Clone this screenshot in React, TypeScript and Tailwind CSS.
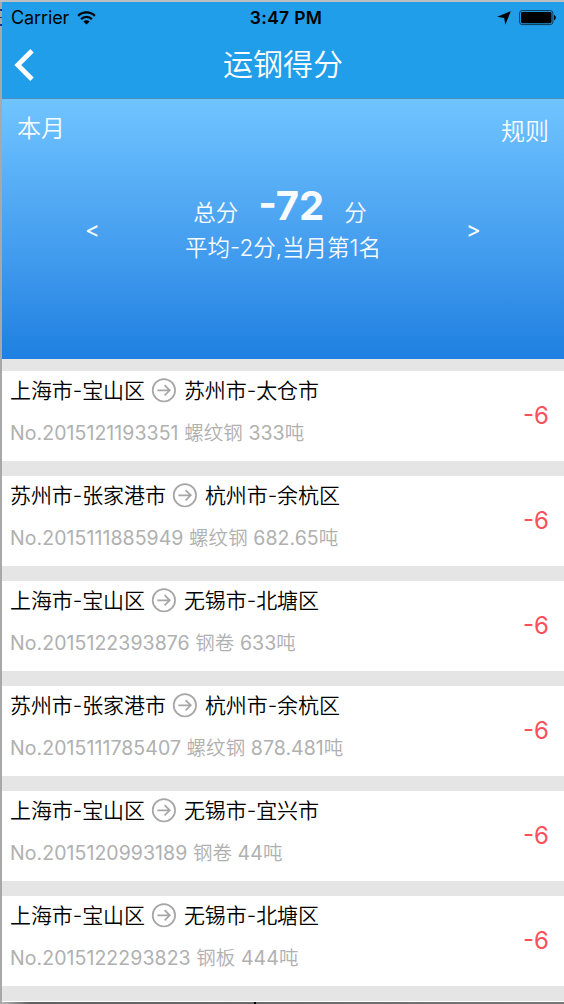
type Shipment = {
  no: string;
  from: string;
  to: string;
  cargo: string;
  tons: string;
  score: string;
};

const SHIPMENTS: Shipment[] = [
  { no: "2015121193351", from: "上海市-宝山区", to: "苏州市-太仓市", cargo: "螺纹钢", tons: "333", score: "-6" },
  { no: "2015111885949", from: "苏州市-张家港市", to: "杭州市-余杭区", cargo: "螺纹钢", tons: "682.65", score: "-6" },
  { no: "2015122393876", from: "上海市-宝山区", to: "无锡市-北塘区", cargo: "钢卷", tons: "633", score: "-6" },
  { no: "2015111785407", from: "苏州市-张家港市", to: "杭州市-余杭区", cargo: "螺纹钢", tons: "878.481", score: "-6" },
  { no: "2015120993189", from: "上海市-宝山区", to: "无锡市-宜兴市", cargo: "钢卷", tons: "44", score: "-6" },
  { no: "2015122293823", from: "上海市-宝山区", to: "无锡市-北塘区", cargo: "钢板", tons: "444", score: "-6" },
];

function WifiIcon() {
  return (
    <svg width="19" height="14" viewBox="0 0 20 14" preserveAspectRatio="none" fill="none" stroke="#000" strokeWidth="2.3">
      <path d="M1.2 4.8C6 .2 14 .2 18.8 4.8" />
      <path d="M4.3 8.1C7.4 5.1 12.6 5.1 15.7 8.1" />
      <path d="M10 13.6L6.7 10.6C8.7 8.9 11.3 8.9 13.3 10.6Z" fill="#000" stroke="none" />
    </svg>
  );
}

function BatteryIcon() {
  return (
    <svg width="38" height="16" viewBox="0 0 38 16">
      <rect x=".6" y=".6" width="33.3" height="14" rx="2.6" fill="none" stroke="#0b3450" strokeWidth="1" />
      <rect x="2" y="2" width="30.5" height="11.2" rx="1.4" />
      <path d="M35 5c2.4.4 2.4 4.8 0 5.2z" />
    </svg>
  );
}

function ArrowCircle() {
  return (
    <svg
      className="mr-[7px] ml-1.5 shrink-0"
      width="25"
      height="25"
      viewBox="0 0 25 25"
      fill="none"
      stroke="#a6a6a6"
      strokeWidth="1.7"
    >
      <circle cx="12.9" cy="12.3" r="11.2" />
      <path d="M6.4 12.3H18.7M13.6 7.2L18.8 12.3L13.6 17.4" />
    </svg>
  );
}

function StatusBar() {
  return (
    <div className="flex h-[31px] items-center px-[9px] text-[18px] leading-none text-black">
      <div className="flex flex-1 items-center gap-2">
        <span className="tracking-[-0.1px]">Carrier</span>
        <WifiIcon />
      </div>
      <span className="ml-1.5 text-[17.5px] font-semibold tracking-[0.3px]">3:47 PM</span>
      <div className="flex flex-1 items-center justify-end gap-2">
        <svg width="14" height="14" viewBox="0 0 14 14">
          <path d="M13.8.2L8.3 13.8L7.2 6.9L.2 5.8Z" />
        </svg>
        <div className="-mr-0.5">
          <BatteryIcon />
        </div>
      </div>
    </div>
  );
}

function ShipmentRow({ shipment }: { shipment: Shipment }) {
  return (
    <li className="flex h-[90px] items-center justify-between bg-white pr-[15px] pl-2">
      <div className="flex h-full flex-col pt-[7px]">
        <div className="flex h-[25px] items-center text-[21px] leading-[25px] whitespace-nowrap text-black">
          <span className="tracking-[-0.08px]">{shipment.from}</span>
          <ArrowCircle />
          <span className="ml-px tracking-[-0.08px]">{shipment.to}</span>
        </div>
        <p className="mt-[18px] text-[19.5px] leading-[25px] tracking-[0.06px] whitespace-nowrap text-[#b0b0b0]">
          <span className="font-normal">No.{shipment.no}</span> {shipment.cargo}{" "}
          <span className="font-normal">{shipment.tons}</span>吨
        </p>
      </div>
      <span className="text-2xl font-normal text-[#fb4f5a]">{shipment.score}</span>
    </li>
  );
}

export default function App() {
  return (
    <div className="flex h-[1004px] w-[564px] overflow-hidden border-t-2 border-[#bebec0] font-['Inter','Noto_Sans_CJK_SC',sans-serif] font-[350]">
      <div className="flex w-0.5 shrink-0 flex-col gap-1.5 bg-[#a8a8a8] pt-[7px]">
        <div className="h-0.5 bg-[#1c2f80]" />
        <div className="h-px bg-[#1c2f80]" />
        <div className="h-0.5 bg-[#1c2f80]" />
      </div>

      <main className="flex w-[562px] flex-col bg-[#e5e5e5]">
        <header className="h-[97px] shrink-0 border-b border-[#4b8fbd] bg-[#219eea] font-normal">
          <StatusBar />
          <div className="flex h-[63px] items-center px-3">
            <button type="button" aria-label="返回" className="flex-1">
              <svg width="20" height="32" viewBox="0 0 20 32" fill="none" stroke="#fff" strokeWidth="4.8">
                <path d="M18 1.8L3.8 16L18 30.2" />
              </svg>
            </button>
            <h1 className="pb-0.5 text-[30px] leading-none font-[350] text-white">运钢得分</h1>
            <div className="flex-1" />
          </div>
        </header>

        <section className="h-[260px] shrink-0 bg-linear-to-b from-[#70c4ff] to-[#1e80e1] text-[#f8fbff]">
          <div className="flex h-[75px] items-start justify-between px-[15px] pt-3 text-2xl leading-9">
            <span>本月</span>
            <button type="button" className="mt-[3px]">规则</button>
          </div>
          <div className="flex items-start justify-between px-[83px] text-[22.5px]">
            <button type="button" className="mt-[38px] leading-9 font-normal">&lt;</button>
            <div className="flex flex-col items-center pt-[7px]">
              <div className="mr-1.5 flex items-baseline gap-5 leading-[50px]">
                <span className="relative top-px">总分</span>
                <strong className="text-[40px] font-bold">-72</strong>
                <span className="relative top-px">分</span>
              </div>
              <p className="-mt-[7px] leading-9">平均-2分,当月第1名</p>
            </div>
            <button type="button" className="mt-[38px] leading-9 font-normal">&gt;</button>
          </div>
        </section>

        <ul className="mt-3 flex shrink-0 flex-col gap-[15px]">
          {SHIPMENTS.map((shipment) => (
            <ShipmentRow key={shipment.no} shipment={shipment} />
          ))}
        </ul>
        <div className="mt-[15px] h-px shrink-0 bg-white" />
        <div className="flex h-0.5 shrink-0 bg-linear-to-r from-[#b5b5b5] via-[#606060] via-5% to-[#777777]">
          <div className="ml-[252px] w-0.5 bg-black" />
        </div>
      </main>
    </div>
  );
}
